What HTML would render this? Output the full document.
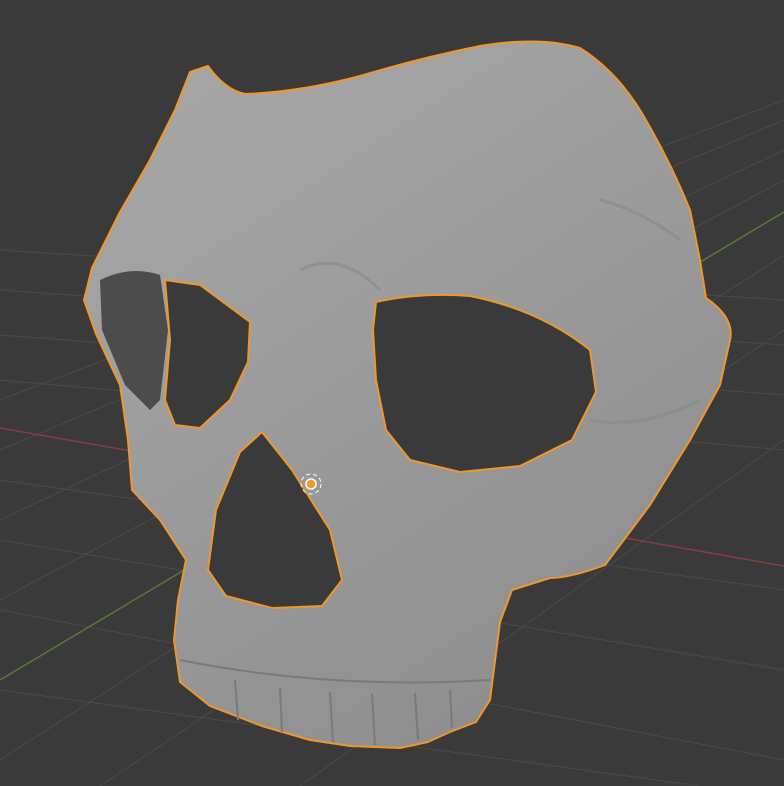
<!DOCTYPE html>
<html><head><style>
html,body{margin:0;padding:0;background:#3a3a3a;}
svg{display:block;}
</style></head><body>
<svg width="784" height="786" viewBox="0 0 784 786" xmlns="http://www.w3.org/2000/svg">
<defs>
<linearGradient id="sk" x1="0" y1="0" x2="0.6" y2="1">
<stop offset="0" stop-color="#a8a8a8"/>
<stop offset="0.5" stop-color="#9c9c9c"/>
<stop offset="1" stop-color="#8e8e8e"/>
</linearGradient>
</defs>
<rect width="784" height="786" fill="#3a3a3a"/>
<g stroke="#4a4a4a" stroke-width="1">
<line x1="0" y1="250" x2="784" y2="300"/>
<line x1="0" y1="290" x2="784" y2="345"/>
<line x1="0" y1="335" x2="784" y2="395"/>
<line x1="0" y1="380" x2="784" y2="450"/>
<line x1="0" y1="480" x2="784" y2="590"/>
<line x1="0" y1="540" x2="784" y2="670"/>
<line x1="0" y1="610" x2="784" y2="760"/>
<line x1="0" y1="690" x2="700" y2="786"/>
<line x1="0" y1="600" x2="784" y2="180"/>
<line x1="0" y1="760" x2="784" y2="255"/>
<line x1="100" y1="786" x2="784" y2="330"/>
<line x1="300" y1="786" x2="784" y2="440"/>
<line x1="0" y1="520" x2="784" y2="150"/>
<line x1="0" y1="450" x2="784" y2="120"/>
<line x1="0" y1="400" x2="784" y2="100"/>
</g>
<line x1="0" y1="428" x2="784" y2="566" stroke="#8a3a44" stroke-width="1.5"/>
<line x1="0" y1="680" x2="784" y2="212" stroke="#5a7a2e" stroke-width="1.5"/>
<path fill="url(#sk)" stroke="#f0962a" stroke-width="2" stroke-linejoin="round" d="M190 72 L208 66 Q225 90 245 94 Q300 92 360 76 Q420 58 480 46 Q540 36 580 48 Q615 70 640 110 Q670 160 690 210 L700 260 L706 298 Q735 318 730 340 L720 385 L690 440 L650 505 L605 565 Q570 578 550 578 L512 590 L500 622 L490 700 L476 722 L450 732 L428 742 L400 748 L350 746 L310 740 L262 726 L210 706 L180 682 L174 640 L178 600 L186 560 L160 520 L132 490 L128 440 L120 385 L96 334 L84 300 L92 268 L120 212 L150 160 L175 110 Z"/>
<path fill="#4c4c4c" d="M100 280 Q130 265 160 275 L168 330 L160 400 L150 410 L125 385 L102 330 Z"/>
<path fill="#3a3a3a" stroke="#f0962a" stroke-width="2" d="M165 280 L200 285 L250 322 L248 362 L230 400 L200 428 L175 425 L165 400 L170 340 Z"/>
<path fill="#3a3a3a" stroke="#f0962a" stroke-width="2" d="M376 302 Q420 292 470 296 Q540 310 590 350 L596 392 L572 440 L520 466 L460 472 L410 460 L386 430 L376 380 L373 330 Z"/>
<path fill="#3a3a3a" stroke="#f0962a" stroke-width="2" d="M262 432 L292 470 L330 530 L342 580 L322 606 L272 608 L226 596 L208 570 L216 510 L240 452 Z"/>
<g stroke="#7a7a7a" stroke-width="2" fill="none">
<path d="M180 660 Q330 690 490 680"/>
<path d="M235 680 L238 720 M280 688 L282 732 M330 692 L333 742 M372 694 L375 745 M415 693 L418 740 M450 690 L452 728"/>
</g>
<g stroke="#888" stroke-width="3" fill="none" opacity="0.6">
<path d="M600 200 Q640 210 680 240"/>
<path d="M590 420 Q640 430 700 400"/>
<path d="M300 270 Q340 250 380 290"/>
</g>
<circle cx="311" cy="484" r="5" fill="#f0962a" stroke="#fff" stroke-width="1.5"/>
<circle cx="311" cy="484" r="10" fill="none" stroke="#fff" stroke-width="1" stroke-dasharray="4 3"/>
</svg>
</body></html>
